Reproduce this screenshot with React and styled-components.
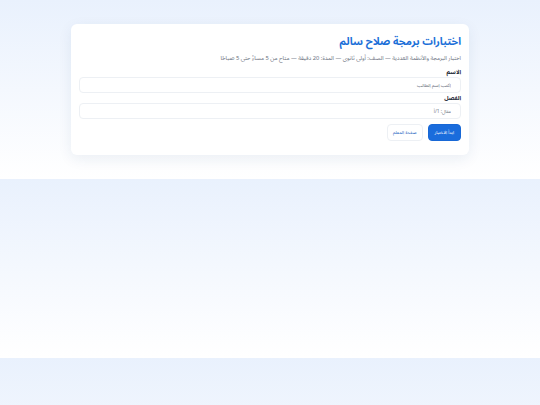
import React from 'react';
import styled, { createGlobalStyle } from 'styled-components';

const GlobalStyle = createGlobalStyle`
  html, body {
    margin: 0;
    padding: 0;
  }
  body {
    background: linear-gradient(180deg, #e9f1fd 0%, #ffffff 100%);
    font-family: "Noto Sans Arabic", "Noto Sans", sans-serif;
    direction: rtl;
  }
`;

const Page = styled.div`
  padding: 24px 0;
`;

const Card = styled.div`
  max-width: 398px;
  margin: 0 auto;
  background: #ffffff;
  border-radius: 6px;
  box-shadow: 0 4px 14px rgba(30, 60, 120, 0.08);
  padding: 8px 8px 14px;
  box-sizing: border-box;
`;

const Title = styled.h1`
  margin: 0;
  color: #1b6fd8;
  font-size: 10.5px;
  font-weight: 700;
  line-height: 20px;
`;

const Subtitle = styled.p`
  margin: 1px 0 0;
  color: #6b7280;
  font-size: 5.75px;
  line-height: 10px;
`;

const Field = styled.div`
  margin-top: ${p => p.$first ? '4px' : '0'};
`;

const Label = styled.label`
  display: block;
  color: #1f2937;
  font-size: 5.8px;
  font-weight: 700;
  line-height: 10px;
`;

const Input = styled.input`
  display: block;
  width: 100%;
  box-sizing: border-box;
  height: 16px;
  border: 1px solid #edf0f4;
  border-radius: 4px;
  padding: 0 9px;
  font-family: inherit;
  font-size: 4.8px;
  color: #374151;
  background: #fff;
  outline: none;
  &::placeholder {
    color: #6b7280;
  }
`;

const Actions = styled.div`
  display: flex;
  gap: 5px;
  margin-top: 5px;
`;

const Button = styled.button`
  height: 17px;
  padding: 0 ${p => p.$primary ? '6px' : '5px'};
  border-radius: 4px;
  font-family: inherit;
  font-size: 4.5px;
  cursor: pointer;
  border: 1px solid ${p => p.$primary ? '#1868d6' : '#edf0f4'};
  background: ${p => p.$primary ? '#1a6cdc' : '#ffffff'};
  color: ${p => p.$primary ? '#ffffff' : '#1b5fc0'};
`;

export default function App() {
  return (
    <>
      <GlobalStyle />
      <Page>
        <Card>
          <Title>اختبارات برمجة صلاح سالم</Title>
          <Subtitle>
            اختبار البرمجة والأنظمة العددية — الصف: أولى ثانوي — المدة: 20 دقيقة — متاح من 5 مساءً حتى 5 صباحًا
          </Subtitle>
          <Field $first>
            <Label>الاسم</Label>
            <Input placeholder="اكتب اسم الطالب" />
          </Field>
          <Field>
            <Label>الفصل</Label>
            <Input placeholder="مثال: 1/أ" />
          </Field>
          <Actions>
            <Button $primary>ابدأ الاختبار</Button>
            <Button>صفحة المعلم</Button>
          </Actions>
        </Card>
      </Page>
    </>
  );
}
